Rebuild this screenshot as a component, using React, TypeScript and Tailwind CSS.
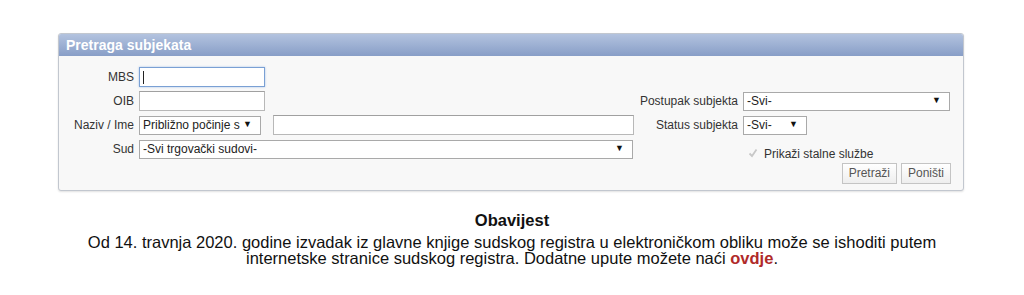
import React from 'react'

const font = { fontFamily: '"Liberation Sans", Arial, sans-serif' }

function Select({ value, width }: { value: string; width: string }) {
  return (
    <div
      className={`${width} flex h-[19px] items-center justify-between border border-[#a9a9a9] bg-white pl-[3px] pr-[8px] text-[12px] text-[#222]`}
    >
      <span className="truncate">{value}</span>
      <span className="text-[9px] text-[#111]">▼</span>
    </div>
  )
}

function TextInput({ width, focused }: { width: string; focused?: boolean }) {
  return (
    <div
      className={`${width} flex h-[20px] items-center bg-white pl-[3px] ${
        focused ? 'border border-[#7aa0d4] shadow-[0_0_2px_#a9c4ea]' : 'border border-[#b8b8b8] border-t-[#a0a0a0]'
      }`}
    >
      {focused && <span className="h-[13px] w-px bg-[#222]" />}
    </div>
  )
}

function Label({ children }: { children: React.ReactNode }) {
  return <div className="flex items-center justify-end pr-[5px] text-[12px] text-[#333]">{children}</div>
}

function Button({ children }: { children: React.ReactNode }) {
  return (
    <button className="h-[21px] border border-[#c4c4c4] bg-gradient-to-b from-white to-[#eeeeee] px-[6px] text-[12px] text-[#555]">
      {children}
    </button>
  )
}

export default function App() {
  return (
    <div className="min-h-[295px] bg-white pt-[33px]" style={font}>
      {/* Search panel */}
      <div className="mx-[58px] w-[906px] overflow-hidden rounded-[3px] border border-[#c2c7cf] bg-[#f8f8f8] shadow-[0_1px_2px_rgba(0,0,0,0.12)]">
        <div className="flex h-[22px] items-center bg-gradient-to-b from-[#b3c3df] to-[#889ec7] pl-[7px] text-[14px] font-bold text-white">
          Pretraga subjekata
        </div>
        <div className="grid grid-cols-[80px_495px_109px_208px] grid-rows-[24px_24px_24px_24px_24px] pb-[5px] pt-[9px]">
          {/* MBS */}
          <Label>MBS</Label>
          <div className="flex items-center">
            <TextInput width="w-[126px]" focused />
          </div>
          <div />
          <div />

          {/* OIB / Postupak */}
          <Label>OIB</Label>
          <div className="flex items-center">
            <TextInput width="w-[126px]" />
          </div>
          <Label>Postupak subjekta</Label>
          <div className="flex items-center">
            <Select value="-Svi-" width="w-[207px]" />
          </div>

          {/* Naziv / Status */}
          <Label>Naziv / Ime</Label>
          <div className="flex items-center gap-[12px]">
            <Select value="Približno počinje s" width="w-[122px]" />
            <TextInput width="w-[361px]" />
          </div>
          <Label>Status subjekta</Label>
          <div className="flex items-center">
            <Select value="-Svi-" width="w-[64px]" />
          </div>

          {/* Sud / checkbox */}
          <Label>Sud</Label>
          <div className="flex items-center">
            <Select value="-Svi trgovački sudovi-" width="w-[494px]" />
          </div>
          <div />
          <div className="flex items-end gap-[5px] pl-[4px] text-[12px] text-[#333]">
            <svg width="12" height="12" viewBox="0 0 12 12" className="mb-[2px]">
              <path d="M2.5 6.5 L5 9 L9.5 2.5" fill="none" stroke="#c8c8c8" strokeWidth="1.8" />
            </svg>
            <span className="-mb-[2px]">Prikaži stalne službe</span>
          </div>

          {/* Buttons */}
          <div />
          <div />
          <div />
          <div className="flex items-center justify-end gap-[4px]">
            <Button>Pretraži</Button>
            <Button>Poništi</Button>
          </div>
        </div>
      </div>

      {/* Notice */}
      <div className="mt-[21px] text-center text-[16.5px] leading-[16px] text-[#111]">
        <div className="font-bold">Obavijest</div>
        <div className="mt-[6px]">
          Od 14. travnja 2020. godine izvadak iz glavne knjige sudskog registra u elektroničkom obliku može se ishoditi putem
          <br />
          internetske stranice sudskog registra. Dodatne upute možete naći{' '}
          <a href="#" className="font-bold text-[#b02a2a]">
            ovdje
          </a>
          .
        </div>
      </div>
    </div>
  )
}
